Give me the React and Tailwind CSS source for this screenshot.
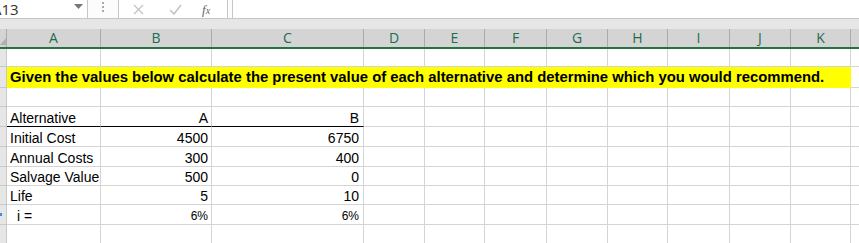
import React from 'react';

// column widths incl. right gridline: A..K, then L takes the rest
const colW = ['w-[94px]', 'w-[111px]', 'w-[152px]', 'w-[61px]', 'w-[60px]', 'w-[62px]', 'w-[61px]', 'w-[60px]', 'w-[62px]', 'w-[61px]', 'w-[60px]'];
const letters = ['A', 'B', 'C', 'D', 'E', 'F', 'G', 'H', 'I', 'J', 'K'];

const font = "font-['Liberation_Sans',Arial,sans-serif]";

const tableRows = [
    { h: 'h-[20px]', label: 'Alternative', a: 'A', b: 'B', line: true },
    { h: 'h-[20px]', label: 'Initial Cost', a: '4500', b: '6750' },
    { h: 'h-[20px]', label: 'Annual Costs', a: '300', b: '400' },
    { h: 'h-[19px]', label: 'Salvage Value', a: '500', b: '0' },
    { h: 'h-[19px]', label: 'Life', a: '5', b: '10' },
    { h: 'h-[20px]', label: 'i =', a: '6%', b: '6%', small: true, mark: true },
];

const RowHead = ({ mark }) => (
    <div className="w-[7px] shrink-0 bg-[#e6e6e6] border-r border-b border-[#c8c8c8] relative">
        {mark && <div className="absolute left-0 top-[8px] w-[2px] h-[3px] bg-[#3b8ed8]" />}
    </div>
);

const EmptyCells = ({ from }) => (
    <>
        {colW.slice(from).map((w, i) => (
            <div key={i} className={`${w} shrink-0 border-r border-b border-[#d4d4d4]`} />
        ))}
        <div className="flex-1 border-b border-[#d4d4d4]" />
    </>
);

const App = () => {
    return (
        <div className={`w-[859px] h-[243px] overflow-hidden bg-white ${font}`}>
            {/* formula bar */}
            <div className="h-[19px] flex bg-[#fcfcfc] border-b border-[#c6c6c6]">
                <div className="w-[88px] shrink-0 bg-white border-r border-[#c6c6c6] flex items-center overflow-hidden relative">
                    <span className="ml-[-8px] text-[15px] text-[#333] font-['Open_Sans',sans-serif] leading-none">A13</span>
                    <svg className="absolute left-[74px] top-[4px]" width="9" height="6" viewBox="0 0 9 6">
                        <path d="M0 0 L9 0 L4.5 5 Z" fill="#777" />
                    </svg>
                </div>
                <div className="w-[30px] shrink-0 flex flex-col items-center pt-[2px] gap-[2px]">
                    <div className="w-[2px] h-[2px] bg-[#aaa]" />
                    <div className="w-[2px] h-[2px] bg-[#aaa]" />
                    <div className="w-[2px] h-[2px] bg-[#aaa]" />
                </div>
                <div className="w-[110px] shrink-0 bg-white border-x border-[#c6c6c6] flex items-center">
                    <svg className="ml-[14px]" width="11" height="11" viewBox="0 0 11 11">
                        <path d="M1 1 L10 10 M10 1 L1 10" stroke="#c4c4c4" strokeWidth="1.3" />
                    </svg>
                    <svg className="ml-[25px]" width="13" height="11" viewBox="0 0 13 11">
                        <path d="M1 6 L5 10 L12 1" stroke="#c4c4c4" strokeWidth="1.6" fill="none" />
                    </svg>
                    <span className="ml-[20px] italic text-[13px] text-[#666] font-['Liberation_Serif',serif] leading-none">
                        f<span className="text-[10px]">x</span>
                    </span>
                </div>
                <div className="w-[4px] shrink-0" />
                <div className="flex-1 bg-white border-l border-[#c6c6c6]" />
            </div>
            <div className="h-[10px] bg-[#e6e6e6]" />

            {/* column headers */}
            <div className="h-[18px] flex bg-[#d4d4d4] text-[14px] text-[#1e6b4f] font-['Open_Sans',sans-serif]">
                <div className="w-[7px] shrink-0 border-r border-[#ababab] relative">
                    <svg className="absolute left-0 bottom-[2px]" width="6" height="7" viewBox="0 0 6 7">
                        <path d="M6 0 L6 7 L0 7 Z" fill="#b0b0b0" />
                    </svg>
                </div>
                {colW.map((w, i) => (
                    <div key={i} className={`${w} shrink-0 border-r border-[#ababab] flex items-center justify-center leading-none`}>
                        {letters[i]}
                    </div>
                ))}
                <div className="flex-1" />
            </div>
            <div className="h-[2px] bg-[#217346]" />

            {/* row 1 */}
            <div className="h-[18px] flex">
                <RowHead />
                <EmptyCells from={0} />
            </div>

            {/* row 2, yellow */}
            <div className="h-[21px] flex">
                <RowHead />
                <div className="w-[844px] shrink-0 bg-[#ffff00] flex items-center pl-[3px] text-[14.85px] font-bold text-black whitespace-nowrap leading-none">
                    Given the values below calculate the present value of each alternative and determine which you would recommend.
                </div>
                <div className="flex-1 border-b border-[#d4d4d4]" />
            </div>

            {/* row 3 */}
            <div className="h-[19px] flex">
                <RowHead />
                <EmptyCells from={0} />
            </div>

            {tableRows.map((r, i) => (
                <div key={i} className={`${r.h} flex`}>
                    <RowHead mark={r.mark} />
                    <div className={`w-[94px] shrink-0 border-r border-b ${r.line ? 'border-b-black' : 'border-b-[#d4d4d4]'} border-r-[#d4d4d4] flex items-end pb-[1px] text-[14px] text-black leading-none whitespace-nowrap overflow-hidden ${r.small ? 'pl-[10px]' : 'pl-[3px]'}`}>
                        {r.label}
                    </div>
                    <div className={`w-[111px] shrink-0 border-r border-b ${r.line ? 'border-b-black' : 'border-b-[#d4d4d4]'} border-r-[#d4d4d4] flex items-end justify-end pb-[1px] pr-[3px] ${r.small ? 'text-[12px] pb-[2px]' : 'text-[14px]'} text-black leading-none`}>
                        {r.a}
                    </div>
                    <div className={`w-[152px] shrink-0 border-r border-b ${r.line ? 'border-b-black' : 'border-b-[#d4d4d4]'} border-r-[#d4d4d4] flex items-end justify-end pb-[1px] pr-[4px] ${r.small ? 'text-[12px] pb-[2px]' : 'text-[14px]'} text-black leading-none`}>
                        {r.b}
                    </div>
                    <EmptyCells from={3} />
                </div>
            ))}

            {/* row 10 */}
            <div className="h-[20px] flex">
                <RowHead />
                <EmptyCells from={0} />
            </div>
        </div>
    );
};

export default App;
